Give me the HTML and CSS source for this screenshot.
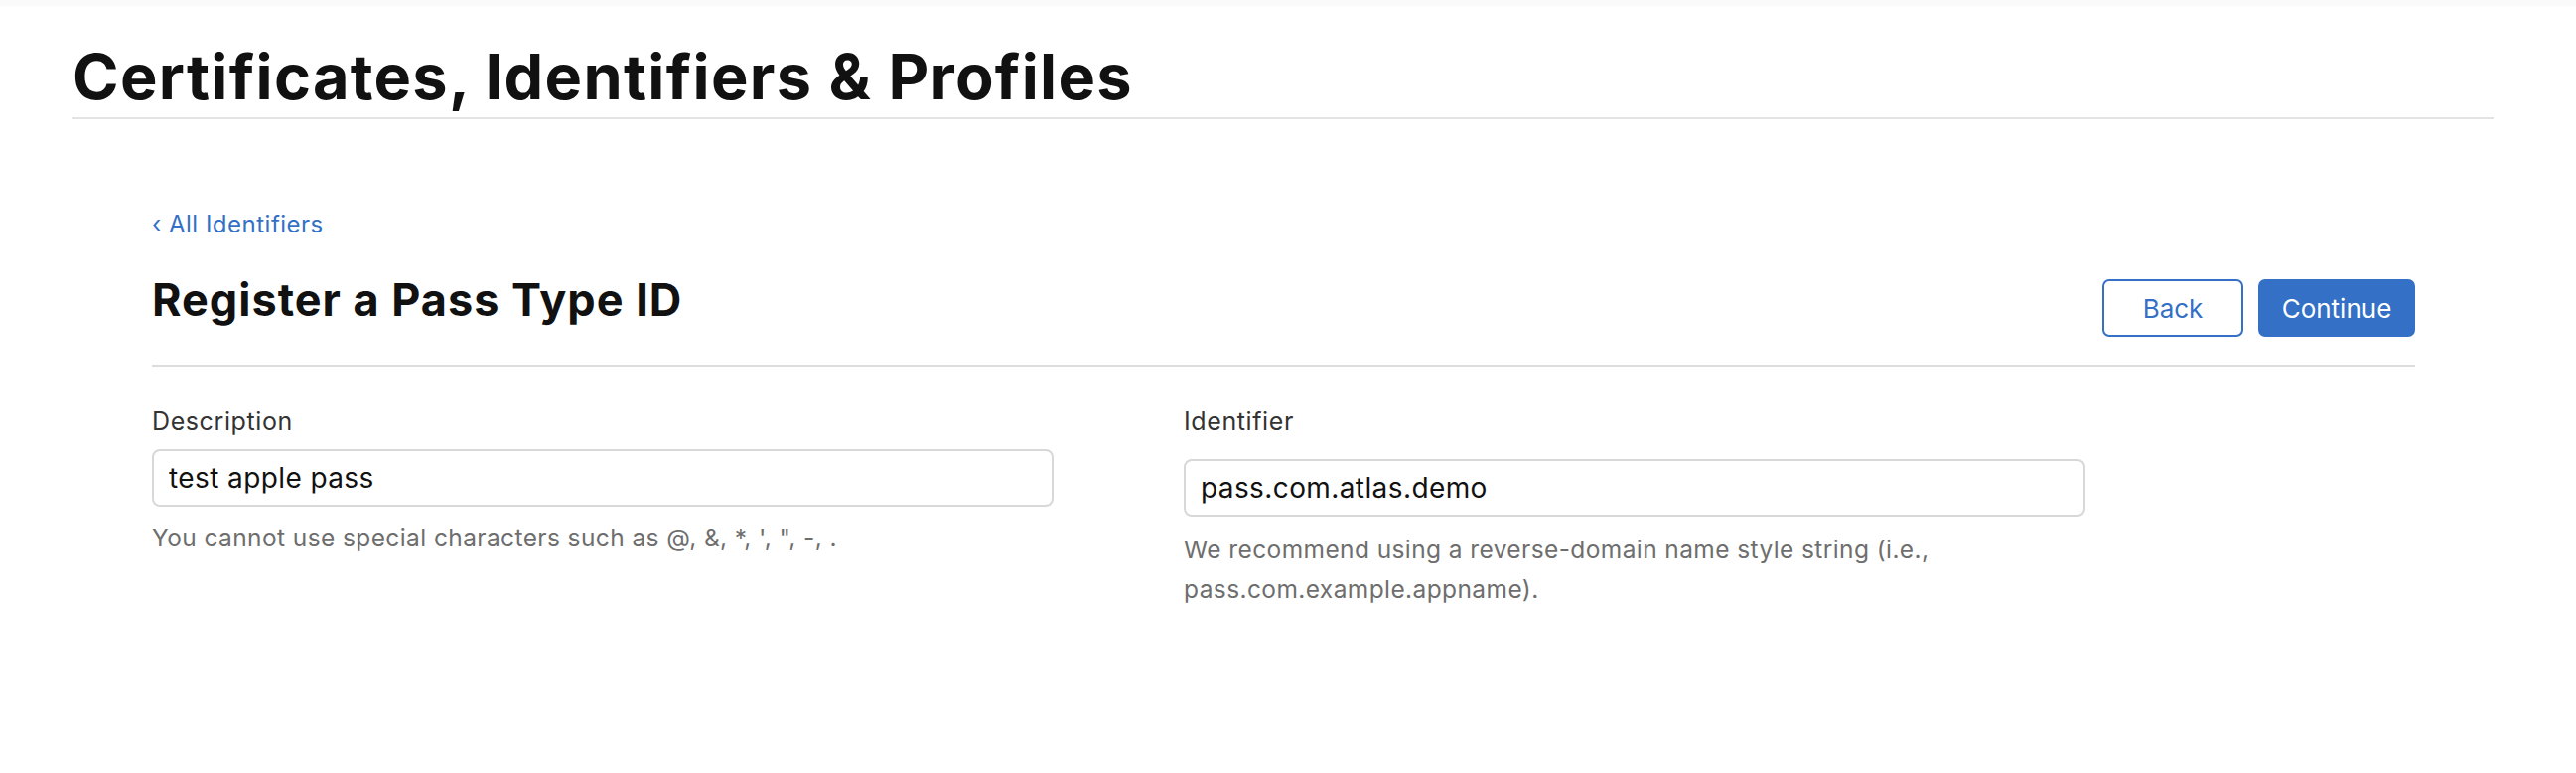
FILE: index.html
```html
<!DOCTYPE html>
<html lang="en">
<head>
<meta charset="utf-8">
<title>Certificates, Identifiers &amp; Profiles</title>
<link rel="stylesheet" href="styles.css">
</head>
<body>
<div class="topbar"></div>
<header class="page-header">
  <h1 class="page-title">Certificates, Identifiers &amp; Profiles</h1>
</header>
<main class="main">
  <a class="back-link" href="#"><span class="chev">‹</span> All Identifiers</a>
  <div class="head-row">
    <h2 class="section-title">Register a Pass Type ID</h2>
    <div class="actions">
      <button class="btn btn-secondary" type="button">Back</button>
      <button class="btn btn-primary" type="button">Continue</button>
    </div>
  </div>
  <div class="form-grid">
    <div class="field">
      <label class="label" for="desc">Description</label>
      <input class="input" id="desc" type="text" value="test apple pass">
      <p class="help">You cannot use special characters such as @, &amp;, *, ', ", -, .</p>
    </div>
    <div class="field field-id">
      <label class="label" for="ident">Identifier</label>
      <input class="input" id="ident" type="text" value="pass.com.atlas.demo">
      <p class="help">We recommend using a reverse-domain name style string (i.e., pass.com.example.appname).</p>
    </div>
  </div>
</main>
</body>
</html>
```

FILE: styles.css
```css
* { box-sizing: border-box; }

body {
  margin: 0;
  background: #ffffff;
  font-family: Inter, "Noto Sans", "Liberation Sans", sans-serif;
  color: #1d1d1f;
}

.topbar {
  height: 6px;
  background: #fafafa;
}

.page-header {
  margin: 0 83px 0 73px;
  padding-top: 42px;
  padding-bottom: 11px;
  border-bottom: 2px solid #e3e3e3;
}

.page-title {
  margin: 0;
  font-size: 63px;
  line-height: 59px;
  font-weight: 700;
  letter-spacing: 1.3px;
  color: #111111;
}

.main {
  margin: 0 162px 0 153px;
  padding-top: 94px;
}

.back-link {
  display: block;
  font-size: 24px;
  line-height: 24px;
  letter-spacing: 0.5px;
  color: #3370c6;
  text-decoration: none;
}

.chev {
  font-size: 24px;
}

.head-row {
  display: flex;
  justify-content: space-between;
  align-items: flex-start;
  margin-top: 42px;
  padding-bottom: 28px;
  border-bottom: 2px solid #dcdcdc;
}

.section-title {
  margin: 0;
  font-size: 45px;
  line-height: 44px;
  font-weight: 700;
  letter-spacing: 1px;
  color: #111111;
}

.actions {
  display: flex;
  gap: 15px;
  margin-top: 1px;
}

.btn {
  height: 58px;
  border-radius: 7px;
  font-family: inherit;
  font-size: 26px;
  font-weight: 400;
  cursor: pointer;
}

.btn-secondary {
  width: 142px;
  background: #ffffff;
  color: #3370c6;
  border: 2px solid #3370c6;
}

.btn-primary {
  width: 158px;
  background: #3370c6;
  color: #ffffff;
  border: 2px solid #3370c6;
}

.form-grid {
  display: grid;
  grid-template-columns: 908px 908px;
  column-gap: 131px;
  padding-top: 43px;
}

.field {
  display: flex;
  flex-direction: column;
}

.label {
  display: block;
  font-size: 25px;
  line-height: 24px;
  letter-spacing: 0.6px;
  color: #333333;
}

.input {
  display: block;
  width: 100%;
  height: 58px;
  margin-top: 16px;
  padding: 0 15px;
  border: 2px solid #d8d8d8;
  border-radius: 8px;
  font-family: inherit;
  font-size: 28px;
  letter-spacing: 0.4px;
  color: #111111;
  background: #ffffff;
  outline: none;
}

.field-id .input {
  margin-top: 26px;
}

.help {
  margin: 11px 0 0;
  font-size: 24.5px;
  line-height: 40px;
  letter-spacing: 0.4px;
  color: #6e6e6e;
}

.field-id .help {
  margin-top: 13px;
}
```
